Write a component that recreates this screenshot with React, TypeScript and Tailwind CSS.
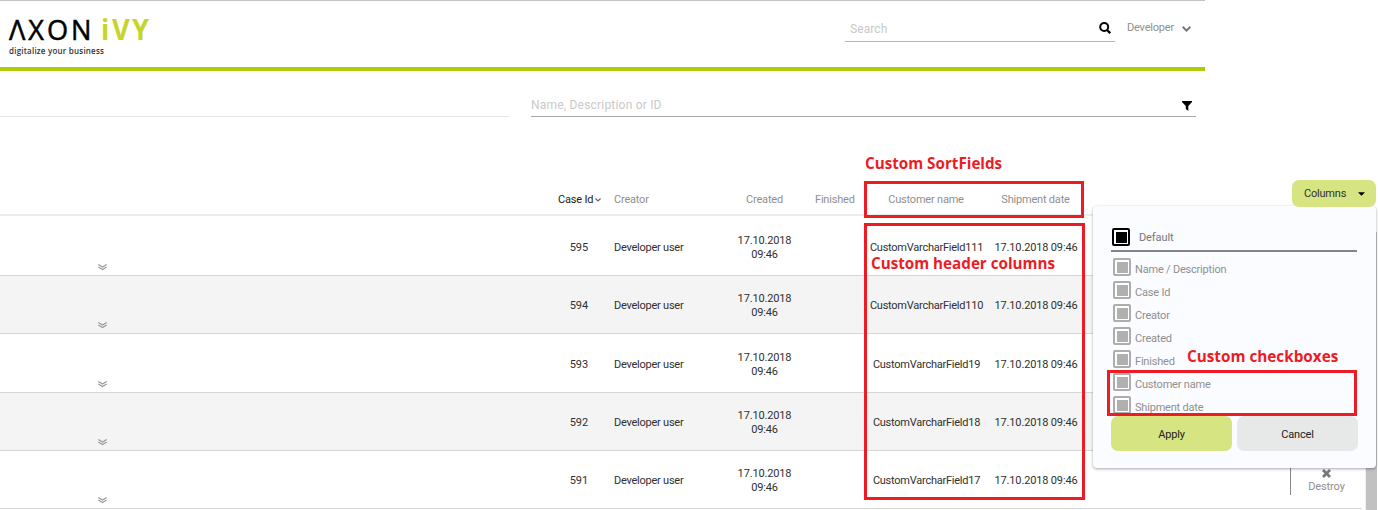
import React from "react";
import { FaCaretDown } from "react-icons/fa";

const rows = [
  { id: "595", field: "CustomVarcharField111", size: "h-[60px] pt-[5px] bg-white" },
  { id: "594", field: "CustomVarcharField110", size: "h-[58px] pt-[3px] bg-[#f4f4f4]" },
  { id: "593", field: "CustomVarcharField19", size: "h-[59px] pt-[3px] bg-white" },
  { id: "592", field: "CustomVarcharField18", size: "h-[58px] pt-[3px] bg-[#f4f4f4]" },
  { id: "591", field: "CustomVarcharField17", size: "h-[58px] pt-[3px] bg-white" },
];

const columns = ["Name / Description", "Case Id", "Creator", "Created", "Finished", "Customer name", "Shipment date"];

function DoubleChevron() {
  return (
    <svg className="h-[7px] w-[9px]" viewBox="0 0 9 7" fill="none" stroke="#9a9a9a" strokeWidth="1.2">
      <path d="M0.3 0.5 L4.5 3 L8.7 0.5 M0.3 3 L4.5 5.5 L8.7 3" />
    </svg>
  );
}

function SearchIcon() {
  return (
    <svg className="size-[12px]" viewBox="0 0 12 12" fill="none" stroke="#000" strokeWidth="2">
      <circle cx="5.2" cy="5" r="4" />
      <path d="M8 8 L11.2 11.2" strokeWidth="2.3" />
    </svg>
  );
}

function Header() {
  return (
    <header className="flex h-[71px] w-[1205px] items-start border-t border-b-[4px] border-t-[#c4c4c4] border-b-[#b0ca06]">
      <div className="w-[845px] pt-[14px] pl-[9px]">
        <div className="flex h-[28px] origin-left scale-x-[0.97] items-center font-['Open_Sans'] text-[28px] leading-[28px]">
          <span className="tracking-[3px] text-black [-webkit-text-stroke:0.5px_#000]">ΛXON</span>
          <span className="ml-[7px] font-bold tracking-[2.6px] text-[#c6d52a]">iVY</span>
        </div>
        <div className="mt-[3px] font-['Open_Sans'] text-[8px] leading-[10px] font-semibold tracking-[0.21px] text-[#333]">digitalize your business</div>
      </div>
      <div className="mt-[14px] flex h-[27px] w-[270px] items-center justify-between border-b border-[#b5b5b5] pr-[4px] pl-[5px] text-[12px] text-[#c9c9c9]">
        <span className="pt-[2px] tracking-[0.1px]">Search</span>
        <SearchIcon />
      </div>
      <div className="mt-[19px] ml-[12px] flex items-center gap-[8px] text-[11px] leading-[16px] text-[#8f8f8f]">
        <span className="tracking-[-0.2px]">Developer</span>
        <svg className="mt-px h-[6px] w-[9px]" viewBox="0 0 9 6" fill="none" stroke="#777" strokeWidth="2">
          <path d="M0.7 0.8 L4.5 4.6 L8.3 0.8" />
        </svg>
      </div>
    </header>
  );
}

function FilterBar() {
  return (
    <div className="flex h-[46px] items-end">
      <div className="h-px w-[509px] bg-[#e4e4e4]" />
      <div className="ml-[22px] flex h-[26px] w-[665px] items-center justify-between border-b border-[#a8a8a8] pr-[4px] text-[12px] text-[#c9c9c9]">
        <span className="pt-[3px] tracking-[0.2px]">Name, Description or ID</span>
        <svg className="mt-[5px] h-[10px] w-[10px]" viewBox="0 0 10 10" fill="#000">
          <path d="M0 0 H10 V1 L6.3 5 V10 L3.8 8 V5 L0 1 Z" />
        </svg>
      </div>
    </div>
  );
}

function TableHead() {
  return (
    <div className="flex h-[99px] w-[1362px] items-end border-b-2 border-[#ececec] pb-[6px] text-[11px] leading-[16px] tracking-[-0.2px] text-[#8f8f8f]">
      <div className="flex w-[614px] items-center gap-[2px] pl-[558px] text-[#222]">
        <span className="whitespace-nowrap">Case Id</span>
        <svg className="h-[4px] w-[6px]" viewBox="0 0 6 4" fill="none" stroke="#666" strokeWidth="1.2">
          <path d="M0.4 0.5 L3 3 L5.6 0.5" />
        </svg>
      </div>
      <div className="w-[110px]">Creator</div>
      <div className="w-[81px] text-center">Created</div>
      <div className="w-[61px] pl-[10px]">Finished</div>
      <div className="w-[120px] text-center">Customer name</div>
      <div className="w-[99px] text-center">Shipment date</div>
    </div>
  );
}

function CaseRow({ row, last }: { row: (typeof rows)[number]; last: boolean }) {
  return (
    <div className={`${row.size} flex w-[1362px] items-center border-b border-[#d6d6d6] text-[11px] leading-[14px] tracking-[-0.24px] text-[#303030]`}>
      <div className="ml-[98px] self-end pb-[4px]"><DoubleChevron /></div>
      <div className="w-[481px] text-right tracking-[-0.1px]">{row.id}</div>
      <div className="ml-[26px] w-[110px]">Developer user</div>
      <div className="w-[81px] px-[10px] text-center tracking-[-0.15px]">17.10.2018 09:46</div>
      <div className="w-[61px]" />
      <div className="w-[121px] text-center">{row.field}</div>
      <div className="w-[98px] text-center tracking-[-0.15px] whitespace-nowrap">17.10.2018 09:46</div>
      {last && (
        <div className="ml-[205px] flex h-[28px] w-[72px] flex-col items-center border-l border-[#888] text-[#8f8f8f]">
          <svg className="mt-[2px] size-[9px] shrink-0" viewBox="0 0 9 9" stroke="#777" strokeWidth="2.8">
            <path d="M1 1 L8 8 M8 1 L1 8" />
          </svg>
          <span className="mt-[2px] tracking-[-0.1px]">Destroy</span>
        </div>
      )}
    </div>
  );
}

function CheckBox({ dark }: { dark?: boolean }) {
  return (
    <span className={`${dark ? "border-black" : "border-[#adadad]"} flex size-[18px] shrink-0 items-center justify-center rounded-[2px] border-2 bg-white`}>
      <span className={`${dark ? "bg-black" : "bg-[#b0b0b0]"} size-[11px]`} />
    </span>
  );
}

function ColumnsMenu() {
  return (
    <div className="absolute top-[206px] left-[1093px] h-[262px] w-[283px] rounded-[4px] bg-[#fafcff] pt-[22px] pl-[18px] text-[11px] tracking-[-0.2px] text-[#8f8f8f] shadow-[0_1px_3px_rgba(0,0,0,0.35)]">
      <div className="flex h-[24px] w-[246px] items-start gap-[9px] border-b-2 border-[#858589] pl-px text-[#777]">
        <CheckBox dark />
        <span className="pt-[2px] leading-[16px] tracking-[-0.1px]">Default</span>
      </div>
      <div className="flex flex-col gap-[5px] pt-[6px] pl-[2px]">
        {columns.map((name) => (
          <div key={name} className="flex h-[18px] items-center gap-[4px]">
            <CheckBox />
            <span className="pt-[5px] leading-[16px]">{name}</span>
          </div>
        ))}
      </div>
      <div className="mt-[2px] flex gap-[5px] text-[#222]">
        <div className="flex h-[35px] w-[121px] items-center justify-center rounded-[7px] bg-[#d6e481] pt-[3px]">Apply</div>
        <div className="flex h-[35px] w-[121px] items-center justify-center rounded-[7px] bg-[#e7e9e8] pt-[3px]">Cancel</div>
      </div>
    </div>
  );
}

export default function App() {
  return (
    <div className="relative h-[510px] w-[1378px] overflow-hidden bg-white font-[Roboto,sans-serif]">
      <Header />
      <FilterBar />
      <TableHead />
      {rows.map((row, i) => (
        <CaseRow key={row.id} row={row} last={i === rows.length - 1} />
      ))}

      <div className="absolute top-[232px] left-[1365px] h-[278px] w-[12px] border-l border-[#f1f1f1] bg-[#c1c1c1]" />
      <ColumnsMenu />
      <div className="absolute top-[180px] left-[1292px] flex h-[27px] w-[84px] items-center justify-between rounded-[7px] bg-[#d6e481] pr-[9px] pl-[12px] text-[11px] text-[#333]">
        <span className="pt-px tracking-[-0.2px]">Columns</span>
        <FaCaretDown className="size-[11px] text-black" />
      </div>

      <div className="absolute top-[181px] left-[864px] h-[37px] w-[220px] border-[3px] border-[#ed1c24]" />
      <div className="absolute top-[223px] left-[864px] h-[277px] w-[221px] border-[3px] border-[#ed1c24]" />
      <div className="absolute top-[370px] left-[1107px] h-[46px] w-[250px] border-[3px] border-[#ed1c24]" />
      <div className="absolute top-[153px] left-[865px] origin-left scale-x-[0.95] font-['Open_Sans'] text-[16px] leading-[20px] font-bold whitespace-nowrap text-[#ed1c24]">Custom SortFields</div>
      <div className="absolute top-[253px] left-[871px] origin-left scale-x-[0.95] font-['Open_Sans'] text-[16px] leading-[20px] font-bold whitespace-nowrap text-[#ed1c24]">Custom header columns</div>
      <div className="absolute top-[346px] left-[1187px] origin-left scale-x-[0.955] font-['Open_Sans'] text-[16px] leading-[20px] font-bold whitespace-nowrap text-[#ed1c24]">Custom checkboxes</div>
    </div>
  );
}
